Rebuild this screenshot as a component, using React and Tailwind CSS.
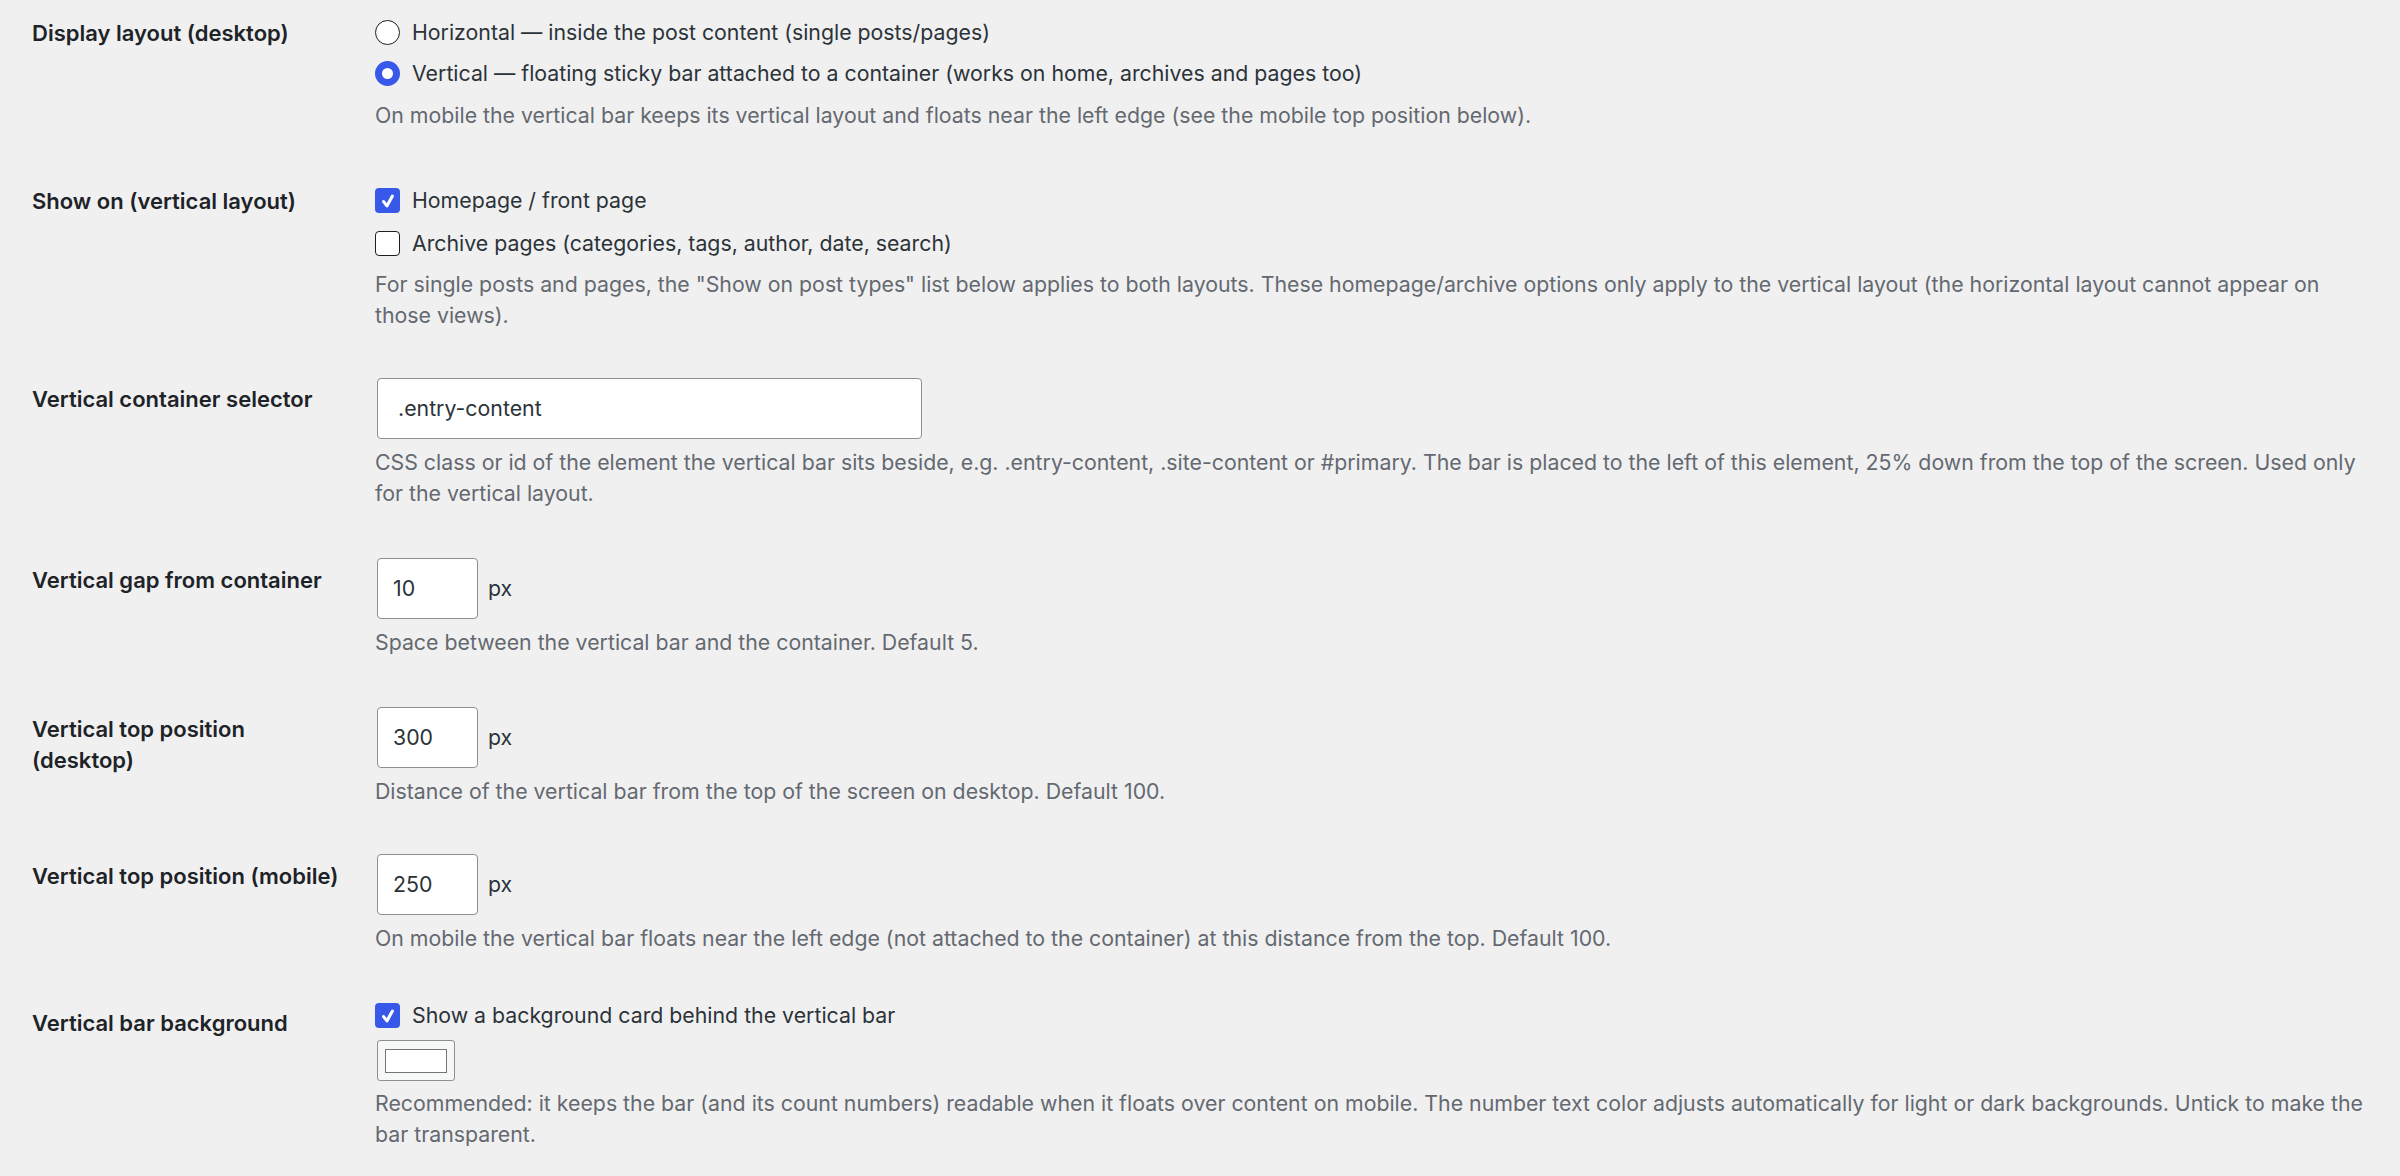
const font = { fontFamily: 'Inter, "Noto Sans", sans-serif' }

function Radio({ checked, children }) {
  return (
    <label className="flex h-[31px] items-center gap-[12px] text-[#2c3338]">
      {checked ? (
        <span className="flex size-[25px] shrink-0 items-center justify-center rounded-full bg-[#3858e9]">
          <span className="size-[11px] rounded-full bg-white" />
        </span>
      ) : (
        <span className="size-[25px] shrink-0 rounded-full border-[1.5px] border-[#1e1e1e] bg-white" />
      )}
      <span>{children}</span>
    </label>
  )
}

function Checkbox({ checked, children }) {
  return (
    <label className="flex h-[31px] items-center gap-[12px] text-[#2c3338]">
      {checked ? (
        <span className="flex size-[25px] shrink-0 items-center justify-center rounded-[4px] bg-[#3858e9]">
          <svg viewBox="0 0 20 20" className="size-[22px]" fill="none" stroke="white" strokeWidth="2.8" strokeLinecap="round" strokeLinejoin="round">
            <path d="M6 10.5l3 4 5-9" />
          </svg>
        </span>
      ) : (
        <span className="size-[25px] shrink-0 rounded-[4px] border-[1.5px] border-[#1e1e1e] bg-white" />
      )}
      <span>{children}</span>
    </label>
  )
}

function Desc({ className = '', children }) {
  return <p className={`text-[#646970] ${className}`}>{children}</p>
}

function NumberField({ value }) {
  return (
    <div className="ml-[2px] flex items-center gap-[10px]">
      <div className="flex h-[61px] w-[101px] items-center rounded-[4px] border border-[#8c8f94] bg-white pl-[15px] text-[#2c3338]">{value}</div>
      <span className="text-[#2c3338]">px</span>
    </div>
  )
}

function Row({ label, labelTop, top, children }) {
  return (
    <div className="flex">
      <div className="w-[343px] shrink-0 pr-[30px] text-[22px] font-semibold leading-[31px] text-[#1d2327]" style={{ paddingTop: labelTop }}>{label}</div>
      <div className="w-[1990px]" style={{ paddingTop: top }}>{children}</div>
    </div>
  )
}

export default function App() {
  return (
    <div className="min-h-[1176px] bg-[#f0f0f1] pl-[32px] text-[21.3px] leading-[31px]" style={font}>
      <Row label="Display layout (desktop)" labelTop={18} top={17}>
        <div className="flex flex-col gap-[10px]">
          <Radio>Horizontal — inside the post content (single posts/pages)</Radio>
          <Radio checked>Vertical — floating sticky bar attached to a container (works on home, archives and pages too)</Radio>
        </div>
        <Desc className="mt-[11px]">On mobile the vertical bar keeps its vertical layout and floats near the left edge (see the mobile top position below).</Desc>
      </Row>

      <Row label="Show on (vertical layout)" labelTop={55} top={54}>
        <div className="flex flex-col gap-[12px]">
          <Checkbox checked>Homepage / front page</Checkbox>
          <Checkbox>Archive pages (categories, tags, author, date, search)</Checkbox>
        </div>
        <Desc className="mt-[10px]">For single posts and pages, the "Show on post types" list below applies to both layouts. These homepage/archive options only apply to the vertical layout (the horizontal layout cannot appear on those views).</Desc>
      </Row>

      <Row label="Vertical container selector" labelTop={53} top={47}>
        <div className="ml-[2px] flex h-[61px] w-[545px] items-center rounded-[4px] border border-[#8c8f94] bg-white pl-[20px] text-[#2c3338]">.entry-content</div>
        <Desc className="mt-[8px]">CSS class or id of the element the vertical bar sits beside, e.g. .entry-content, .site-content or #primary. The bar is placed to the left of this element, 25% down from the top of the screen. Used only for the vertical layout.</Desc>
      </Row>

      <Row label="Vertical gap from container" labelTop={56} top={49}>
        <NumberField value="10" />
        <Desc className="mt-[8px]">Space between the vertical bar and the container. Default 5.</Desc>
      </Row>

      <Row label="Vertical top position (desktop)" labelTop={56} top={49}>
        <NumberField value="300" />
        <Desc className="mt-[8px]">Distance of the vertical bar from the top of the screen on desktop. Default 100.</Desc>
      </Row>

      <Row label="Vertical top position (mobile)" labelTop={54} top={47}>
        <NumberField value="250" />
        <Desc className="mt-[8px]">On mobile the vertical bar floats near the left edge (not attached to the container) at this distance from the top. Default 100.</Desc>
      </Row>

      <Row label="Vertical bar background" labelTop={54} top={46}>
        <Checkbox checked>Show a background card behind the vertical bar</Checkbox>
        <div className="ml-[2px] mt-[9px] flex h-[41px] w-[78px] items-center justify-center rounded-[3px] border border-[#8c8f94] bg-[#f6f7f7]">
          <div className="h-[24px] w-[62px] border border-[#757575] bg-white" />
        </div>
        <Desc className="mt-[7px]">Recommended: it keeps the bar (and its count numbers) readable when it floats over content on mobile. The number text color adjusts automatically for light or dark backgrounds. Untick to make the bar transparent.</Desc>
      </Row>
    </div>
  )
}
